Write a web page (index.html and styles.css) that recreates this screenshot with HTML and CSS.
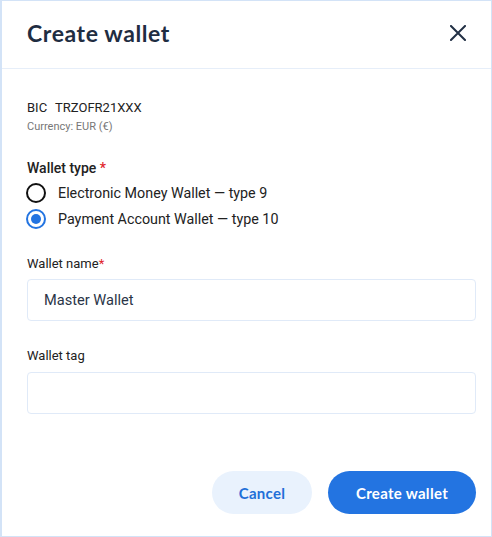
FILE: index.html
```html
<!DOCTYPE html>
<html lang="en">
<head>
    <meta charset="UTF-8">
    <meta name="viewport" content="width=device-width, initial-scale=1.0">
    <title>Create wallet</title>
    <link rel="stylesheet" href="styles.css">
</head>
<body>
    <div class="modal">
        <div class="modal-header">
            <h1>Create wallet</h1>
            <button class="close" aria-label="Close">
                <svg width="16" height="16" viewBox="0 0 16 16">
                    <path d="M1 1L15 15M15 1L1 15" stroke="#223045" stroke-width="2" stroke-linecap="square" fill="none"/>
                </svg>
            </button>
        </div>

        <div class="modal-body">
            <div class="bic"><span>BIC</span> TRZOFR21XXX</div>
            <div class="currency">Currency: EUR (€)</div>

            <div class="group-label">Wallet type <span class="req">*</span></div>
            <label class="radio">
                <span class="dot"></span>
                Electronic Money Wallet — type 9
            </label>
            <label class="radio checked">
                <span class="dot"></span>
                Payment Account Wallet — type 10
            </label>

            <div class="field-label">Wallet name<span class="req">*</span></div>
            <div class="input">Master Wallet</div>

            <div class="field-label tag">Wallet tag</div>
            <div class="input"></div>
        </div>

        <div class="modal-footer">
            <button class="btn btn-light">Cancel</button>
            <button class="btn btn-primary">Create wallet</button>
        </div>
    </div>
</body>
</html>
```

FILE: styles.css
```css
* {
    box-sizing: border-box;
}
body {
    margin: 0;
    font-family: Roboto, Arial, sans-serif;
    color: #222;
    background-color: #fff;
}
.modal {
    display: flex;
    flex-direction: column;
    height: 100vh;
    border: 1px solid #d3e3f7;
    border-left-width: 2px;
}
.modal-header {
    display: flex;
    align-items: center;
    justify-content: space-between;
    height: 68px;
    padding: 0 25px 3px 25px;
    border-bottom: 1px solid #e6eef9;
}
h1 {
    margin: 0;
    font-family: Lato, sans-serif;
    font-weight: 700;
    font-size: 23px;
    letter-spacing: 0.6px;
    color: #1f2d42;
}
.close {
    padding: 0;
    border: none;
    background: none;
    display: flex;
}
.modal-body {
    padding: 31px 15px 0 25px;
}
.bic {
    font-size: 13px;
    line-height: 16px;
}
.bic span {
    margin-right: 5px;
}
.currency {
    font-size: 11px;
    line-height: 14px;
    color: #777;
    margin-top: 4px;
}
.group-label {
    font-size: 14px;
    font-weight: 500;
    line-height: 18px;
    margin-top: 25px;
    margin-bottom: 3px;
}
.req {
    color: #e0242b;
}
.radio {
    display: flex;
    align-items: center;
    height: 26px;
    font-size: 14.3px;
    color: #222;
}
.radio .dot {
    width: 20px;
    height: 20px;
    border: 2px solid #111;
    border-radius: 50%;
    margin-right: 12px;
    margin-left: -1px;
    position: relative;
}
.radio.checked .dot {
    border-color: #2374e1;
}
.radio.checked .dot::after {
    content: "";
    position: absolute;
    top: 3px;
    left: 3px;
    width: 10px;
    height: 10px;
    border-radius: 50%;
    background-color: #2374e1;
}
.field-label {
    font-size: 13px;
    line-height: 16px;
    margin-top: 24px;
    margin-bottom: 7px;
}
.field-label.tag {
    margin-top: 27px;
    margin-bottom: 8px;
}
.input {
    height: 42px;
    border: 1px solid #e0eaf8;
    border-radius: 4px;
    padding: 0 16px;
    display: flex;
    align-items: center;
    font-size: 14.6px;
    color: #2a3547;
}
.modal-footer {
    margin-top: auto;
    display: flex;
    justify-content: flex-end;
    gap: 16px;
    padding: 0 15px 22px 25px;
}
.btn {
    height: 43px;
    border: none;
    border-radius: 22px;
    font-family: Lato, sans-serif;
    font-weight: 700;
    font-size: 15px;
    letter-spacing: 0.3px;
    cursor: pointer;
}
.btn-light {
    width: 100px;
    background-color: #e9f2fd;
    color: #1f6fd8;
}
.btn-primary {
    width: 148px;
    background-color: #2374e1;
    color: #fff;
}
```
